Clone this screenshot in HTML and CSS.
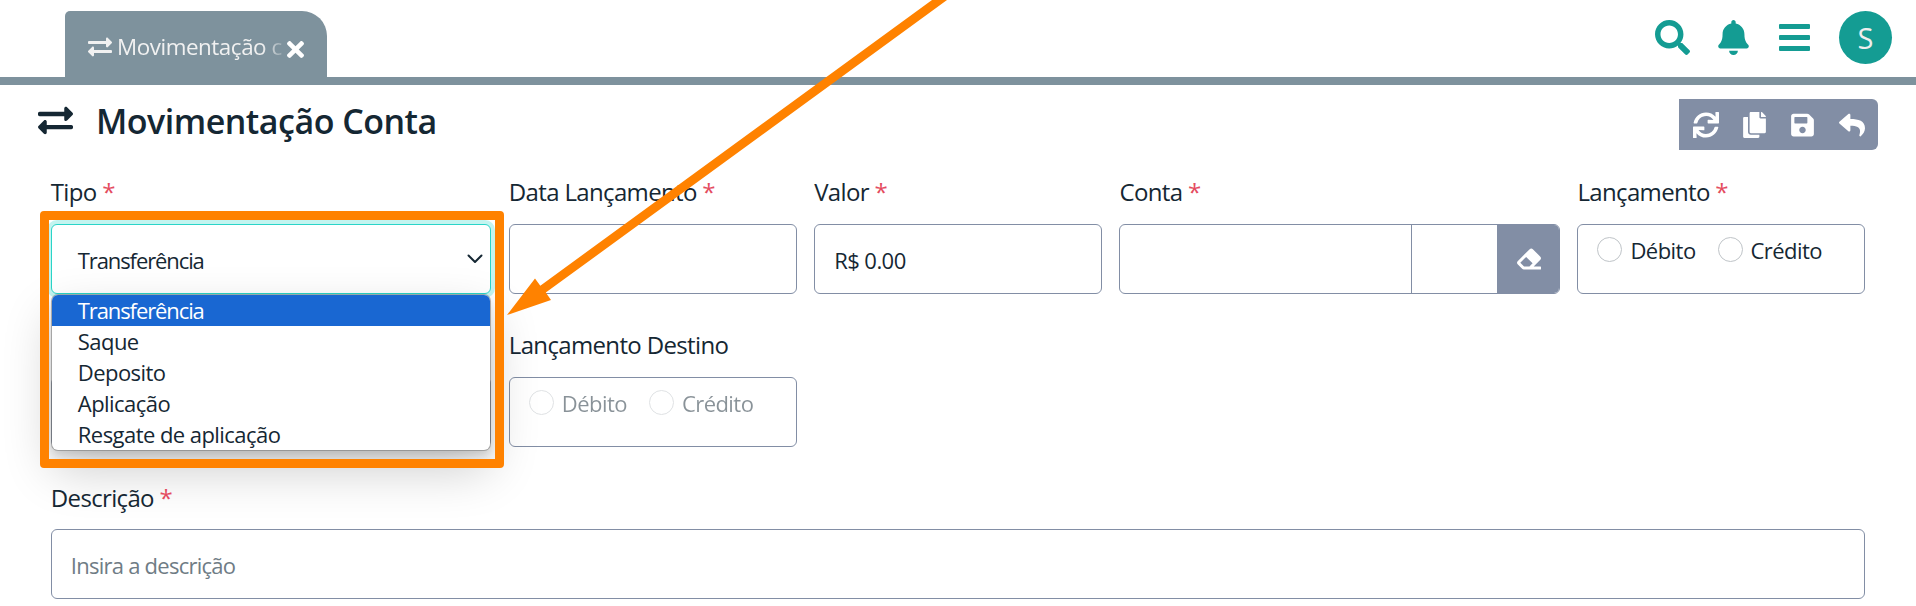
FILE: index.html
```html
<!DOCTYPE html>
<html lang="pt-BR">
<head>
<meta charset="utf-8">
<title>Movimentação Conta</title>
<link rel="stylesheet" href="styles.css">
</head>
<body>
<svg class="defs" width="0" height="0">
  <symbol id="exchange" viewBox="0 0 512 512"><path d="M0 168v-16c0-13.255 10.745-24 24-24h360V80c0-21.367 25.899-32.042 40.971-16.971l80 80c9.372 9.373 9.372 24.569 0 33.941l-80 80C409.956 271.982 384 261.456 384 240v-48H24c-13.255 0-24-10.745-24-24zm488 152H128v-48c0-21.314-25.862-32.08-40.971-16.971l-80 80c-9.372 9.373-9.372 24.569 0 33.941l80 80C102.057 463.997 128 453.437 128 432v-48h360c13.255 0 24-10.745 24-24v-16c0-13.255-10.745-24-24-24z"/></symbol>
</svg>

<header class="topbar">
  <div class="tab">
    <svg class="tab-icon"><use href="#exchange"/></svg>
    <span class="tab-text">Movimentação c</span>
    <svg class="tab-close" viewBox="0 80 352 352"><path d="M242.72 256l100.07-100.07c12.28-12.28 12.28-32.19 0-44.48l-22.24-22.24c-12.28-12.28-32.19-12.28-44.48 0L176 189.28 75.93 89.21c-12.28-12.28-32.19-12.28-44.48 0L9.21 111.45c-12.28 12.28-12.28 32.19 0 44.48L109.28 256 9.21 356.07c-12.28 12.28-12.28 32.19 0 44.48l22.24 22.24c12.28 12.28 32.2 12.28 44.48 0L176 322.72l100.07 100.07c12.28 12.28 32.2 12.28 44.48 0l22.24-22.24c12.28-12.28 12.28-32.19 0-44.48L242.72 256z"/></svg>
  </div>
  <nav class="actions">
    <svg class="i-search" viewBox="0 0 512 512"><path d="M505 442.7L405.3 343c-4.5-4.5-10.6-7-17-7H372c27.6-35.3 44-79.7 44-128C416 93.1 322.9 0 208 0S0 93.1 0 208s93.1 208 208 208c48.3 0 92.7-16.4 128-44v16.3c0 6.4 2.5 12.5 7 17l99.7 99.7c9.4 9.4 24.6 9.4 33.9 0l28.3-28.3c9.4-9.4 9.4-24.6.1-34zM208 336c-70.7 0-128-57.2-128-128 0-70.7 57.2-128 128-128 70.7 0 128 57.2 128 128 0 70.7-57.2 128-128 128z"/></svg>
    <svg class="i-bell" viewBox="0 0 448 512"><path d="M224 512c35.32 0 63.97-28.65 63.97-64H160.03c0 35.35 28.65 64 63.97 64zm215.39-149.71c-19.32-20.76-55.47-51.99-55.47-154.29 0-77.7-54.48-139.9-127.94-155.16V32c0-17.67-14.32-32-31.98-32s-31.98 14.33-31.98 32v20.84C118.56 68.1 64.08 130.3 64.08 208c0 102.3-36.15 133.53-55.47 154.29-6 6.45-8.66 14.16-8.61 21.71.11 16.4 12.98 32 32.1 32h383.8c19.12 0 32-15.6 32.1-32 .05-7.55-2.61-15.27-8.61-21.71z"/></svg>
    <svg class="i-bars" viewBox="0 0 31 27"><rect width="31" height="5" rx="1"/><rect y="11" width="31" height="5" rx="1"/><rect y="22" width="31" height="5" rx="1"/></svg>
    <span class="avatar">S</span>
  </nav>
</header>

<section class="heading">
  <svg class="title-icon"><use href="#exchange"/></svg>
  <h1>Movimentação Conta</h1>
  <div class="toolbar">
    <svg class="i-sync" viewBox="0 0 512 512"><path d="M440.65 12.57l4 82.77A247.16 247.16 0 0 0 255.83 8C134.73 8 33.91 94.92 12.29 209.82A12 12 0 0 0 24.09 224h49.05a12 12 0 0 0 11.67-9.26 175.91 175.91 0 0 1 317-56.94l-101.46-4.86a12 12 0 0 0-12.57 12v47.41a12 12 0 0 0 12 12H500a12 12 0 0 0 12-12V12a12 12 0 0 0-12-12h-47.37a12 12 0 0 0-11.98 12.57zM255.83 432a175.61 175.61 0 0 1-146-77.8l101.8 4.87a12 12 0 0 0 12.57-12v-47.4a12 12 0 0 0-12-12H12a12 12 0 0 0-12 12V500a12 12 0 0 0 12 12h47.35a12 12 0 0 0 12-12.6l-4.15-82.57A247.17 247.17 0 0 0 255.83 504c121.11 0 221.93-86.92 243.55-201.82a12 12 0 0 0-11.8-14.18h-49.05a12 12 0 0 0-11.67 9.26A175.86 175.86 0 0 1 255.83 432z"/></svg>
    <svg class="i-copy" viewBox="0 0 448 512"><path d="M320 448v40c0 13.255-10.745 24-24 24H24c-13.255 0-24-10.745-24-24V120c0-13.255 10.745-24 24-24h72v296c0 30.879 25.121 56 56 56h168zm0-344V0H152c-13.255 0-24 10.745-24 24v368c0 13.255 10.745 24 24 24h272c13.255 0 24-10.745 24-24V128H344c-13.2 0-24-10.8-24-24zm120.971-31.029L375.029 7.029A24 24 0 0 0 358.059 0H352v96h96v-6.059a24 24 0 0 0-7.029-16.97z"/></svg>
    <svg class="i-save" viewBox="0 0 448 512"><path d="M433.941 129.941l-83.882-83.882A48 48 0 0 0 316.118 32H48C21.49 32 0 53.49 0 80v352c0 26.51 21.49 48 48 48h352c26.51 0 48-21.49 48-48V163.882a48 48 0 0 0-14.059-33.941zM224 416c-35.346 0-64-28.654-64-64 0-35.346 28.654-64 64-64s64 28.654 64 64c0 35.346-28.654 64-64 64zm96-304.52V212c0 6.627-5.373 12-12 12H76c-6.627 0-12-5.373-12-12V108c0-6.627 5.373-12 12-12h228.52c3.183 0 6.235 1.264 8.485 3.515l3.48 3.48A11.996 11.996 0 0 1 320 111.48z"/></svg>
    <svg class="i-reply" viewBox="0 0 512 512"><path d="M8.309 189.836L184.313 37.851C199.719 24.546 224 35.347 224 56.015v80.053c160.629 1.839 288 34.032 288 186.258 0 61.441-39.581 122.309-83.333 154.132-13.653 9.931-33.111-2.533-28.077-18.631 45.344-145.012-21.507-183.51-176.59-185.742V360c0 20.7-24.3 31.453-39.687 18.164l-176.004-152c-11.071-9.562-11.086-26.753 0-36.328z"/></svg>
  </div>
</section>

<main class="form">
  <div class="field w3">
    <div class="label">Tipo <i>*</i></div>
    <div class="box select">
      <span class="value tight">Transferência</span>
      <svg class="chevron" viewBox="0 0 16 10"><path d="M1.5 1.5l6.5 6.5 6.5-6.5"/></svg>
      <ul class="menu">
        <li class="on tight">Transferência</li>
        <li>Saque</li>
        <li>Deposito</li>
        <li>Aplicação</li>
        <li>Resgate de aplicação</li>
      </ul>
      <div class="highlight"></div>
    </div>
  </div>
  <div class="field w2">
    <div class="label">Data Lançamento <i>*</i></div>
    <div class="box"></div>
  </div>
  <div class="field w2">
    <div class="label">Valor <i>*</i></div>
    <div class="box"><span class="value">R$ 0.00</span></div>
  </div>
  <div class="field w3">
    <div class="label">Conta <i>*</i></div>
    <div class="box group">
      <span class="part-name"></span>
      <span class="part-code"></span>
      <span class="clear"><svg viewBox="0 0 512 512"><path d="M497.941 273.941c18.745-18.745 18.745-49.137 0-67.882l-160-160c-18.745-18.745-49.136-18.746-67.883 0l-256 256c-18.745 18.745-18.745 49.137 0 67.882l96 96A48.004 48.004 0 0 0 144 480h356c6.627 0 12-5.373 12-12v-40c0-6.627-5.373-12-12-12H355.883l142.058-142.059zm-302.627-62.627l137.373 137.373L265.373 416H150.628l-80-80 124.686-124.686z"/></svg></span>
    </div>
  </div>
  <div class="field w2">
    <div class="label">Lançamento <i>*</i></div>
    <div class="box radios">
      <span class="radio"><b></b>Débito</span>
      <span class="radio"><b></b>Crédito</span>
    </div>
  </div>

  <div class="field w3">
    <div class="label"></div>
    <div class="box"></div>
  </div>
  <div class="field w2 rest">
    <div class="label">Lançamento Destino</div>
    <div class="box radios disabled">
      <span class="radio"><b></b>Débito</span>
      <span class="radio"><b></b>Crédito</span>
    </div>
  </div>

  <div class="field w12">
    <div class="label over">Descrição <i>*</i></div>
    <div class="box over last"><span class="placeholder">Insira a descrição</span></div>
  </div>
</main>

<svg class="arrow" width="1916" height="606" viewBox="0 0 1916 606"><path d="M507 315L535 278.5 540.3 285.7 932 0H947L545.8 292.6 551 300z"/></svg>
</body>
</html>
```

FILE: styles.css
```css
* { box-sizing: border-box; }
body {
  margin: 0;
  width: 1916px;
  height: 606px;
  overflow: hidden;
  position: relative;
  background: #fff;
  color: #152733;
  font-family: "Open Sans", "Noto Sans", sans-serif;
}
svg { display: block; fill: currentColor; flex: none; }
.defs { position: absolute; }

.topbar {
  height: 85px;
  border-bottom: 8px solid #7e929d;
  display: flex;
  justify-content: space-between;
  padding: 11px 24px 0 65px;
}
.tab {
  width: 262px;
  height: 67px;
  background: #7e929d;
  border-radius: 5px 25px 0 0;
  color: #f1f1f1;
  display: flex;
  align-items: flex-start;
  padding: 0 23px;
}
.tab-icon { width: 24px; height: 24px; margin-top: 24px; }
.tab-text {
  width: 168px;
  margin-left: 5px;
  line-height: 34px;
  margin-top: 19px;
  font-size: 22.4px;
  letter-spacing: -0.45px;
  white-space: nowrap;
  -webkit-mask-image: linear-gradient(90deg, #000 145px, transparent 172px);
  mask-image: linear-gradient(90deg, #000 145px, transparent 172px);
}
.tab-close { width: 17px; height: 17px; margin: 30px 0 0 2px; color: #fff; }

.actions { display: flex; color: #149c93; height: 53px; align-items: center; }
.i-search { width: 35px; height: 35px; margin-right: 28px; }
.i-bell { width: 31px; height: 35px; margin-right: 30px; }
.i-bars { width: 31px; height: 27px; margin-right: 29px; }
.avatar {
  width: 53px;
  height: 53px;
  border-radius: 50%;
  background: #149c93;
  color: #eee;
  font-size: 29px;
  display: flex;
  align-items: center;
  justify-content: center;
}

.heading {
  height: 86px;
  padding: 14px 38px 0;
  display: flex;
}
.title-icon { width: 35px; height: 35px; margin-top: 4px; }
h1 {
  margin: 0 0 0 23px;
  flex: 1;
  font-size: 34px;
  font-weight: 600;
  line-height: 45px;
  letter-spacing: -0.5px;
}
.toolbar {
  width: 199px;
  height: 51px;
  background: #828ea5;
  color: #fff;
  border-radius: 0 6px 6px 0;
  display: flex;
  align-items: center;
  padding-left: 14px;
}
.i-sync { width: 26px; height: 26px; margin-right: 24px; }
.i-copy { width: 23px; height: 26px; margin-right: 25px; }
.i-save { width: 23px; height: 26px; margin-right: 25px; }
.i-reply { width: 26px; height: 26px; }

.form {
  padding: 0 50.8px;
  display: grid;
  grid-template-columns: repeat(12, minmax(0, 1fr));
  column-gap: 17.6px;
  row-gap: 30px;
}
.w2 { grid-column: span 2; }
.w3 { grid-column: span 3; }
.w12 { grid-column: span 12; }
.rest { grid-column: 4 / span 2; }
.label {
  height: 53px;
  line-height: 42px;
  font-size: 24px;
  letter-spacing: -0.65px;
  white-space: nowrap;
}
.w12 .label { height: 52px; }
.label i { color: #e44c5f; font-style: normal; }
.box {
  height: 70px;
  border: 1px solid #828ea5;
  border-radius: 6px;
  background: #fff;
  display: flex;
  align-items: center;
  font-size: 22px;
  letter-spacing: -0.55px;
}
.over { position: relative; z-index: 3; }
.label.over { background: none; }
.value { margin: 1px 0 0 19px; }
.placeholder { margin: 2px 0 0 19px; color: #6f7c85; letter-spacing: -0.75px; }

.select {
  position: relative;
  border-color: #2ad4c8;
  box-shadow: 0 0 0 4px #c3f4f0;
  justify-content: space-between;
}
.select .value { margin-left: 26px; }
.select .tight { letter-spacing: -1.1px; }
.chevron {
  width: 16px;
  height: 10px;
  margin-right: 7px;
  fill: none;
  stroke: #152733;
  stroke-width: 2;
  stroke-linecap: round;
  stroke-linejoin: round;
}
.menu {
  position: absolute;
  z-index: 2;
  left: 0;
  top: 70px;
  width: 438px;
  height: 155px;
  margin: 0;
  padding: 0;
  list-style: none;
  background: #fff;
  border-radius: 6px;
  box-shadow: 0 0 0 1px rgba(120, 120, 120, .55), 0 5px 10px rgba(0, 0, 0, .14), 0 20px 50px rgba(0, 0, 0, .2);
}
.menu li { height: 31px; line-height: 31px; padding-left: 26px; }
.menu .on { background: #1967d2; color: #fff; border-radius: 6px 6px 0 0; }
.highlight {
  position: absolute;
  z-index: 4;
  left: -12px;
  top: -14px;
  width: 464px;
  height: 257px;
  border: 9px solid #ff8200;
  border-radius: 4px;
}

.group { align-items: stretch; overflow: hidden; }
.part-name { flex: 1; border-right: 1px solid #828ea5; }
.part-code { width: 86px; }
.clear {
  width: 63px;
  margin: -1px;
  background: #828ea5;
  color: #fff;
  display: flex;
  align-items: center;
  justify-content: center;
}
.clear svg { width: 24px; height: 24px; margin-left: 2px; }

.radios { align-items: flex-start; padding: 12px 0 0 19px; }
.radio { display: flex; line-height: 27px; margin-right: 22px; }
.radio b {
  width: 25px;
  height: 25px;
  margin-right: 8px;
  border: 1px solid #bfc4c8;
  border-radius: 50%;
}
.disabled .radio { opacity: .5; }

.arrow { position: absolute; z-index: 5; left: 0; top: 0; color: #ff8200; pointer-events: none; }
```
